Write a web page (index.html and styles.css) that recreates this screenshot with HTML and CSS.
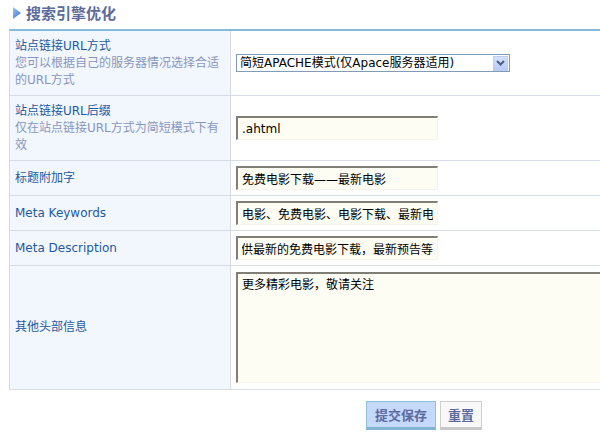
FILE: index.html
```html
<!DOCTYPE html>
<html lang="zh-CN">
<head>
  <meta charset="UTF-8" />
  <title>搜索引擎优化</title>
  <link rel="stylesheet" href="styles.css">
</head>
<body>

  <div class="page">
    <h2 class="title">
      <svg class="title-icon" width="8" height="12" viewBox="0 0 8 12">
        <defs>
          <linearGradient id="tri" x1="0" y1="0" x2="1" y2="1">
            <stop offset="0" stop-color="#9cc4f0"/>
            <stop offset="1" stop-color="#3a72c8"/>
          </linearGradient>
        </defs>
        <polygon points="0,0 8,6 0,12" fill="url(#tri)"/>
      </svg>
      搜索引擎优化
    </h2>

    <form class="form">
      <table class="settings">
        <tr class="tall">
          <td class="label">
            站点链接URL方式
            <div class="hint">您可以根据自己的服务器情况选择合适的URL方式</div>
          </td>
          <td class="field">
            <div class="select">
              <span class="select-text">简短APACHE模式(仅Apace服务器适用)</span>
              <span class="select-btn">
                <svg width="9" height="6" viewBox="0 0 9 6"><path d="M1 1 L4.5 4.5 L8 1" fill="none" stroke="#4d5f85" stroke-width="2"/></svg>
              </span>
            </div>
          </td>
        </tr>
        <tr class="tall">
          <td class="label">
            站点链接URL后缀
            <div class="hint">仅在站点链接URL方式为简短模式下有效</div>
          </td>
          <td class="field"><input class="text" type="text" value=".ahtml"></td>
        </tr>
        <tr>
          <td class="label">标题附加字</td>
          <td class="field"><input class="text" type="text" value="免费电影下载——最新电影"></td>
        </tr>
        <tr>
          <td class="label">Meta Keywords</td>
          <td class="field"><input class="text" type="text" value="电影、免费电影、电影下载、最新电影、最新预告"></td>
        </tr>
        <tr>
          <td class="label">Meta Description</td>
          <td class="field"><input class="text scrolled" type="text" value="本站提供最新的免费电影下载，最新预告等"></td>
        </tr>
        <tr class="big">
          <td class="label">其他头部信息</td>
          <td class="field"><textarea class="area">更多精彩电影，敬请关注</textarea></td>
        </tr>
      </table>

      <div class="buttons">
        <button type="button" class="btn btn-save">提交保存</button>
        <button type="reset" class="btn btn-reset">重置</button>
      </div>
    </form>
  </div>

  <script>
    document.querySelectorAll('.scrolled').forEach(function(el) {
      el.scrollLeft = el.scrollWidth;
    });
  </script>

</body>
</html>
```

FILE: styles.css
```css
html, body {
  overflow: hidden;
}

body {
  margin: 0;
  font-family: 'DejaVu Sans', 'Noto Sans CJK SC', sans-serif;
  font-size: 12px;
  color: #000;
  background: #fff;
}

.page {
  width: 840px;
  padding-left: 9px;
}

.title {
  display: flex;
  align-items: center;
  gap: 5px;
  margin: 0;
  height: 29px;
  padding-left: 4px;
  font-family: 'Noto Sans CJK SC', sans-serif;
  font-size: 15px;
  font-weight: bold;
  color: #5d6b9b;
  position: relative;
  top: -2px;
}

.settings {
  width: 100%;
  border-collapse: separate;
  border-spacing: 0;
  border-top: 2px solid #86b9d8;
  border-left: 1px solid #d6dbe6;
}

.settings td {
  border-bottom: 1px solid #d6dbe6;
  vertical-align: middle;
  height: 34px;
  padding: 0 5px;
  line-height: 17px;
}

.settings tr.tall td {
  height: 64px;
}

.settings tr.big td {
  height: 123px;
}

.label {
  width: 210px;
  background: #f2f6fd;
  border-right: 1px solid #d6dbe6;
  color: #1f5a9e;
}

.hint {
  color: #8896be;
}

.select {
  display: flex;
  align-items: center;
  width: 269px;
  height: 16px;
  border: 1px solid #7f9db9;
  background: #fff;
  padding-left: 3px;
  box-sizing: content-box;
}

.select-text {
  flex: 1;
  white-space: nowrap;
}

.select-btn {
  display: flex;
  align-items: center;
  justify-content: center;
  width: 15px;
  height: 15px;
  margin-right: 1px;
  border: 1px solid #bccdf0;
  box-sizing: border-box;
  background: linear-gradient(#d4e0fc, #b8cbf6);
}

.text,
.area {
  font-family: 'DejaVu Sans', 'Noto Sans CJK SC', sans-serif;
  font-size: 12px;
  color: #000;
  background: #fdfdf4;
  border-style: solid;
  border-width: 2px 1px 1px 2px;
  border-color: #7f7f76 #f4f4ec #f4f4ec #7f7f76;
  box-sizing: border-box;
  outline: none;
}

.text {
  width: 202px;
  height: 24px;
  padding: 0 4px;
}

.area {
  display: block;
  width: 600px;
  height: 111px;
  padding: 3px 4px;
  resize: none;
  line-height: 17px;
}

.buttons {
  display: flex;
  justify-content: center;
  gap: 4px;
  padding-top: 11px;
  padding-right: 10px;
}

.btn {
  height: 29px;
  padding: 0 7px;
  font-family: 'Noto Sans CJK SC', sans-serif;
  font-size: 13px;
  font-weight: bold;
  color: #5d6aa0;
  cursor: pointer;
  border-style: solid;
  border-width: 1px 1px 3px 1px;
}

.btn-save {
  width: 70px;
  background: #c5d9fd;
  border-color: #8fc0de #8fc0de #80b4d2 #8fc0de;
}

.btn-reset {
  width: 42px;
  background: #f8f8f8;
  border-color: #cfcfcf #cfcfcf #c8c8c8 #cfcfcf;
}
```
